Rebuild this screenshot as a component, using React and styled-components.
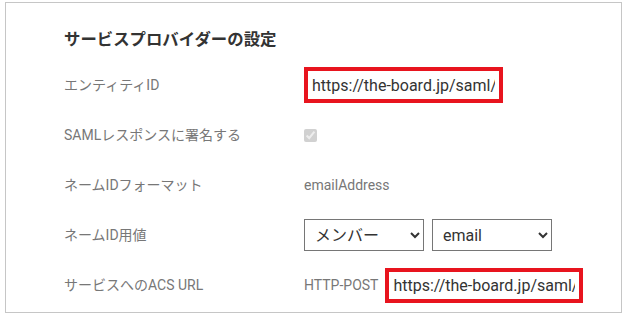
import { createGlobalStyle } from 'styled-components';
import styled from 'styled-components';

const GlobalStyle = createGlobalStyle`
  html, body {
    margin: 0;
    padding: 0;
    background: #ffffff;
  }
  body {
    font-family: Roboto, "Noto Sans CJK JP", sans-serif;
  }
`;

const Page = styled.div`
  padding: 2px 4px 2px 5px;
`;

const Panel = styled.section`
  border: 1px solid #c6c6c6;
  background: #ffffff;
  padding: 25px 58px 2px;
`;

const Heading = styled.h2`
  margin: 0 0 8px;
  font-size: 16.4px;
  line-height: 24px;
  font-weight: bold;
  color: #333333;
`;

const Row = styled.div`
  display: grid;
  grid-template-columns: 240px 1fr;
  align-items: center;
  height: 50px;
`;

const Label = styled.div`
  font-size: 14px;
  color: #777777;
  line-height: 20px;
  white-space: nowrap;
`;

const Value = styled.div`
  display: flex;
  align-items: center;
  gap: ${props => props.gap || 0}px;
  font-size: 14px;
  color: #777777;
  white-space: nowrap;
`;

const UrlInput = styled.input`
  box-sizing: border-box;
  flex: none;
  width: ${props => props.tall ? 198 : 199}px;
  height: ${props => props.tall ? 35 : 36}px;
  margin: 0;
  padding: 0 4px;
  border: 4px solid #e8141e;
  border-radius: 0;
  outline: none;
  background: #ffffff;
  font-family: Roboto, sans-serif;
  font-size: 16px;
  color: #333333;
`;

const Check = styled.input`
  width: 13px;
  height: 13px;
  margin: 0;
`;

const Select = styled.select`
  box-sizing: border-box;
  flex: none;
  width: 120px;
  height: 32px;
  margin: 0;
  padding: 0 6px;
  border: 1px solid #767676;
  border-radius: 0;
  background: #ffffff;
  font-family: Roboto, "Noto Sans CJK JP", sans-serif;
  font-size: 16px;
  color: #333333;
`;

export default function App() {
  return (
    <>
      <GlobalStyle />
      <Page>
        <Panel>
          <Heading>サービスプロバイダーの設定</Heading>
          <Row>
            <Label>エンティティID</Label>
            <Value>
              <UrlInput readOnly value="https://the-board.jp/saml/metadata" />
            </Value>
          </Row>
          <Row>
            <Label>SAMLレスポンスに署名する</Label>
            <Value>
              <Check type="checkbox" checked disabled readOnly />
            </Value>
          </Row>
          <Row>
            <Label>ネームIDフォーマット</Label>
            <Value>emailAddress</Value>
          </Row>
          <Row>
            <Label>ネームID用値</Label>
            <Value gap={8}>
              <Select defaultValue="member">
                <option value="member">メンバー</option>
              </Select>
              <Select defaultValue="email">
                <option value="email">email</option>
              </Select>
            </Value>
          </Row>
          <Row>
            <Label>サービスへのACS URL</Label>
            <Value gap={7}>
              <span>HTTP-POST</span>
              <UrlInput tall readOnly value="https://the-board.jp/saml/acs" />
            </Value>
          </Row>
        </Panel>
      </Page>
    </>
  );
}
